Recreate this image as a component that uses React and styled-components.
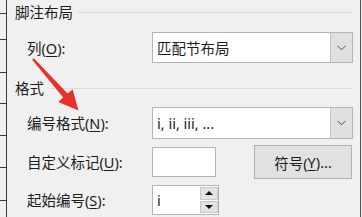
import React from 'react'
import styled, { createGlobalStyle } from 'styled-components'

const GlobalStyle = createGlobalStyle`
  html, body {
    margin: 0;
    padding: 0;
    background: #f0f0f0;
  }
  body {
    font-family: "Noto Sans", "Noto Sans CJK SC", sans-serif;
    color: #1c1c1c;
  }
`

export default function App() {
  return (
    <>
      <GlobalStyle />
      <Page>
        <LeftRuler>
          {[13, 25, 32, 30, 31, 31, 32].map((m, i) => <Tick key={i} $mt={m} />)}
        </LeftRuler>
        <Content>
          <GroupTitle>
            <span>脚注布局</span>
            <Rule />
          </GroupTitle>
          <Row $mt={8} $h={31}>
            <Label>列(<Key>O</Key>):</Label>
            <Combo>
              <ComboText>匹配节布局</ComboText>
              <DropButton><Chevron /></DropButton>
            </Combo>
          </Row>

          <GroupTitle $mt={13}>
            <span>格式</span>
            <Rule />
          </GroupTitle>
          <Row $mt={7} $h={32}>
            <Label>编号格式(<Key>N</Key>):</Label>
            <Combo>
              <ComboText>i, ii, iii, ...</ComboText>
              <DropButton><Chevron /></DropButton>
            </Combo>
          </Row>
          <Row $mt={6} $h={34}>
            <Label>自定义标记(<Key>U</Key>):</Label>
            <TextBox />
            <PushButton>符号(<Key>Y</Key>)...</PushButton>
          </Row>
          <Row $mt={6} $h={30}>
            <Label>起始编号(<Key>S</Key>):</Label>
            <Spinner>
              <SpinValue>i</SpinValue>
              <SpinCol>
                <SpinBtn><Tri $up /></SpinBtn>
                <SpinBtn><Tri /></SpinBtn>
              </SpinCol>
            </Spinner>
          </Row>
        </Content>
        <RightRuler />
        <Arrow viewBox="0 0 362 217">
          <polygon
            points="32.2,59.8 33.8,58.3 67.6,93.6 72.6,89.4 78.5,110.5 58.2,102 63.2,97.6"
            fill="#e6322b"
          />
        </Arrow>
      </Page>
    </>
  )
}

function Chevron() {
  return (
    <svg width="9" height="6" viewBox="0 0 9 6">
      <polyline points="0.5,0.8 4.5,4.8 8.5,0.8" fill="none" stroke="#4a4a4a" strokeWidth="1" />
    </svg>
  )
}

const Page = styled.div`
  position: relative;
  width: 362px;
  height: 217px;
  display: flex;
  overflow: hidden;
  background: #f0f0f0;
`

const LeftRuler = styled.div`
  width: 8px;
  flex: none;
  display: flex;
  flex-direction: column;
  background: linear-gradient(#3a3a3a, #3a3a3a) 6px 0 / 1px 100% no-repeat;
`

const Tick = styled.div`
  width: 7px;
  height: 1px;
  margin-top: ${p => p.$mt}px;
  background: #3a3a3a;
`

const RightRuler = styled.div`
  width: 9px;
  flex: none;
  background: linear-gradient(#555, #555) 7px 0 / 1px 100% no-repeat;
`

const Content = styled.div`
  width: 345px;
  flex: none;
  padding-left: 7px;
  box-sizing: border-box;
  display: flex;
  flex-direction: column;
`

const GroupTitle = styled.div`
  height: 24px;
  margin-top: ${p => p.$mt || 0}px;
  display: flex;
  align-items: center;
  gap: 5px;
  font-size: 14.5px;
  line-height: 24px;
  white-space: nowrap;
`

const Rule = styled.div`
  flex: 1;
  height: 1px;
  background: #d9d9d9;
`

const Row = styled.div`
  height: ${p => p.$h}px;
  margin-top: ${p => p.$mt}px;
  padding-left: 12px;
  display: flex;
  align-items: center;
`

const Label = styled.div`
  width: 125px;
  flex: none;
  font-size: 14.5px;
  line-height: 20px;
  white-space: nowrap;
`

const Key = styled.span`
  text-decoration: underline;
  text-underline-offset: 2px;
`

const Combo = styled.div`
  flex: 1;
  align-self: stretch;
  display: flex;
  background: #fff;
  border: 1px solid #b4b4b4;
  box-sizing: border-box;
`

const ComboText = styled.div`
  flex: 1;
  padding-left: 4px;
  display: flex;
  align-items: center;
  font-size: 14.5px;
  white-space: nowrap;
`

const DropButton = styled.div`
  width: 21px;
  display: flex;
  align-items: center;
  justify-content: center;
  background: #e0e0e0;
  border-left: 1px solid #c6c6c6;
`

const TextBox = styled.div`
  width: 64px;
  height: 30px;
  background: #fff;
  border: 1px solid #b4b4b4;
  box-sizing: border-box;
`

const PushButton = styled.div`
  width: 98px;
  height: 34px;
  margin-left: auto;
  margin-right: 1px;
  box-sizing: border-box;
  background: #e1e1e1;
  border: 1px solid #b0b0b0;
  display: flex;
  align-items: center;
  justify-content: center;
  font-size: 14.5px;
  white-space: nowrap;
`

const Spinner = styled.div`
  width: 67px;
  height: 30px;
  box-sizing: border-box;
  background: #fff;
  border: 1px solid #b4b4b4;
  display: flex;
`

const SpinValue = styled.div`
  flex: 1;
  padding-left: 4px;
  display: flex;
  align-items: center;
  font-size: 14.5px;
`

const SpinCol = styled.div`
  width: 18px;
  display: flex;
  flex-direction: column;
  gap: 1px;
  padding: 1px 0;
`

const SpinBtn = styled.div`
  flex: 1;
  background: #e3e3e3;
  border: 1px solid #c8c8c8;
  display: flex;
  align-items: center;
  justify-content: center;
`

const Tri = styled.div`
  width: 0;
  height: 0;
  border-left: 4px solid transparent;
  border-right: 4px solid transparent;
  ${p => p.$up ? 'border-bottom: 4px solid #111;' : 'border-top: 4px solid #111;'}
`

const Arrow = styled.svg`
  position: absolute;
  left: 0;
  top: 0;
  width: 362px;
  height: 217px;
  pointer-events: none;
`
